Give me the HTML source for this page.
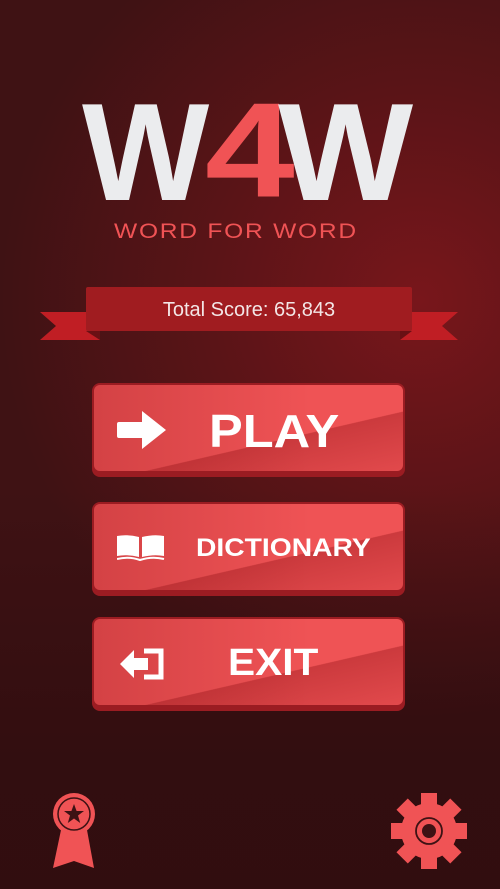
<!DOCTYPE html>
<html><head><meta charset="utf-8"><style>
*{margin:0;padding:0;box-sizing:border-box}
body{width:500px;height:889px;overflow:hidden;position:relative;font-family:"Liberation Sans",sans-serif;
background:radial-gradient(ellipse 420px 420px at 420px 300px,#78161b 0%,#5a1417 50%,#3f1214 100%),#3d1214;}
.bg2{position:absolute;left:0;top:0;width:500px;height:889px;background:linear-gradient(180deg,rgba(0,0,0,0) 55%,rgba(40,10,12,0.55) 85%,rgba(40,10,12,0.6) 100%)}
.L{position:absolute;font-weight:bold;line-height:1;top:83px;font-size:139px;transform-origin:left top}
.btn{position:absolute;left:92px;width:313px;border-radius:8px;background:#9b1c22;overflow:hidden}
.btn .f{position:absolute;left:2px;top:2px;right:2px;bottom:6px;border-radius:6px;background:#ef5355;overflow:hidden}
.btn .s{position:absolute;left:0;top:0;width:100%;height:100%;background:linear-gradient(167deg,rgba(0,0,0,0) 62%,rgba(150,20,25,0.4) 62.5%,rgba(150,20,25,0.15) 100%)}
.btn .s2{position:absolute;left:0;top:0;width:100%;height:100%;background:linear-gradient(90deg,rgba(130,15,20,0.25),rgba(0,0,0,0) 70%)}
.t{position:absolute;color:#fff;font-weight:bold;line-height:1;transform-origin:left top}
</style></head><body>
<div class="bg2"></div>
<div class="L" style="left:82px;color:#ebecee;transform:scaleX(0.97)">W</div>
<div class="L" style="left:205px;color:#f05355;transform:scale(1.16,0.97)">4</div>
<div class="L" style="left:278px;color:#ebecee;transform:scaleX(1.03)">W</div>
<div style="position:absolute;left:114px;top:221px;color:#f05355;font-size:21px;letter-spacing:1.5px;line-height:1;white-space:nowrap;transform:scaleX(1.17);transform-origin:left top">WORD FOR WORD</div>
<svg style="position:absolute;left:0;top:0" width="500" height="400">
<polygon points="40,312 100,312 100,340 40,340 56,326" fill="#c01e24"/>
<polygon points="400,312 458,312 442,326 458,340 400,340" fill="#c01e24"/>
<polygon points="86,331 100,340 100,331" fill="#6a1014"/>
<polygon points="412,331 400,340 400,331" fill="#6a1014"/>
<rect x="86" y="287" width="326" height="44" rx="2" fill="#a01c20"/>
</svg>
<div style="position:absolute;left:86px;width:326px;top:298px;text-align:center;color:#f3e6e6;font-size:20px;line-height:24px">Total Score: 65,843</div>

<div class="btn" style="top:383px;height:94px"><div class="f"><div class="s"></div><div class="s2"></div></div></div>
<svg style="position:absolute;left:117px;top:411px" width="50" height="38"><path d="M2 11 H25 V0 L49 19 L25 38 V27 H2 Q0 27 0 25 V13 Q0 11 2 11Z" fill="#fff"/></svg>
<div class="t" style="left:209px;top:408px;font-size:46px;transform:scaleX(1.1)">PLAY</div>

<div class="btn" style="top:502px;height:94px"><div class="f"><div class="s"></div><div class="s2"></div></div></div>
<svg style="position:absolute;left:117px;top:535px" width="48" height="28"><path d="M0 1 Q10 -1 22 2 V22 Q10 19 0 21Z M25 2 Q37 -1 47 1 V21 Q37 19 25 22Z" fill="#fff"/><path d="M0 24 Q12 21 23 25 Q35 21 47 24" stroke="#fff" stroke-width="2" fill="none"/></svg>
<div class="t" style="left:196px;top:536px;font-size:25px;transform:scaleX(1.13)">DICTIONARY</div>

<div class="btn" style="top:617px;height:94px"><div class="f"><div class="s"></div><div class="s2"></div></div></div>
<svg style="position:absolute;left:120px;top:648px" width="46" height="32"><path d="M0 16 L14 2 V10 H28 V22 H14 V30Z" fill="#fff"/><path d="M24 3 H41 V29 H24" stroke="#fff" stroke-width="5" fill="none"/></svg>
<div class="t" style="left:228px;top:644px;font-size:38px;transform:scaleX(1.07)">EXIT</div>

<svg style="position:absolute;left:50px;top:792px" width="56" height="78">
<polygon points="11,38 37,38 44,76 24,69 3,76" fill="#f05355"/>
<circle cx="24" cy="22" r="21" fill="#f05355"/>
<circle cx="24" cy="22" r="16" fill="none" stroke="#3d1214" stroke-width="1.5"/>
<polygon points="24,12 26.6,19 34,19 28,23.5 30.2,31 24,26.5 17.8,31 20,23.5 14,19 21.4,19" fill="#3d1214"/>
</svg>
<svg style="position:absolute;left:389px;top:791px" width="80" height="80" viewBox="-40 -40 80 80">
<g fill="#f05355"><circle r="28"/>
<g id="t"><rect x="-8" y="-38" width="16" height="14"/></g>
<use href="#t" transform="rotate(45)"/><use href="#t" transform="rotate(90)"/><use href="#t" transform="rotate(135)"/><use href="#t" transform="rotate(180)"/><use href="#t" transform="rotate(225)"/><use href="#t" transform="rotate(270)"/><use href="#t" transform="rotate(315)"/></g>
<circle r="13" fill="none" stroke="#3d1214" stroke-width="1.8"/>
<circle r="7" fill="#3d1214"/>
</svg>
</body></html>
